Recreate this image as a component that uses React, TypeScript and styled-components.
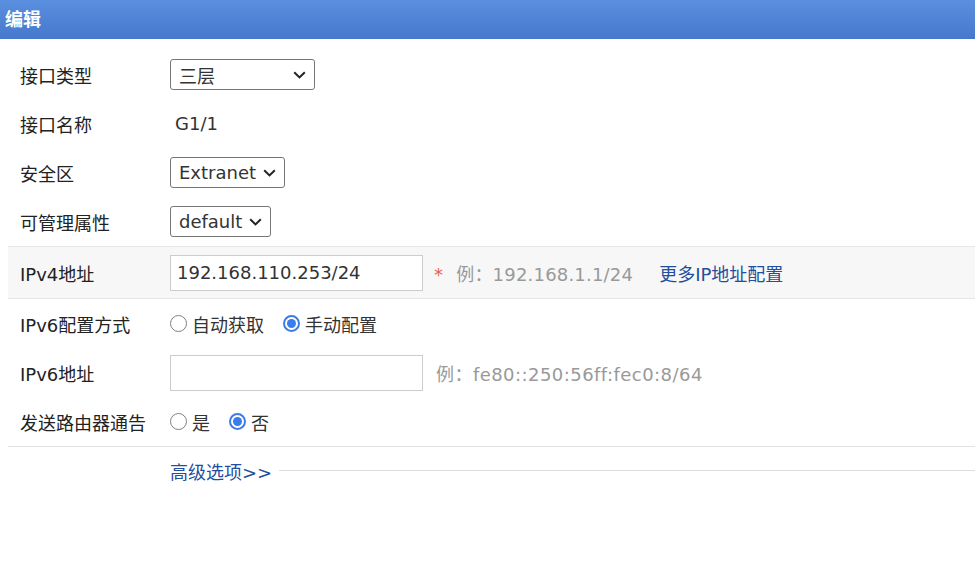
import React from "react";
import styled, { createGlobalStyle } from "styled-components";

const GlobalStyle = createGlobalStyle`
  html, body {
    margin: 0;
    padding: 0;
    background: #ffffff;
  }
  body {
    font-family: "DejaVu Sans", "Noto Sans CJK SC", sans-serif;
    font-size: 18px;
    color: #222;
  }
  * { box-sizing: border-box; }
`;

const Header = styled.div`
  height: 39px;
  display: flex;
  align-items: center;
  padding: 0 0 3px 5px;
  background: linear-gradient(to bottom, #5b8fe0, #4678cc);
  color: #ffffff;
  font-weight: bold;
  font-size: 18px;
  font-family: "Noto Sans CJK SC", sans-serif;
`;

const Form = styled.div`
  margin: 11px 0 0 8px;
  display: flex;
  flex-direction: column;
`;

const Row = styled.div<{ $h?: number; $shaded?: boolean }>`
  display: flex;
  align-items: center;
  height: ${(p) => p.$h ?? 49}px;
  background: ${(p) => (p.$shaded ? "#f7f7f7" : "transparent")};
  border-top: ${(p) => (p.$shaded ? "1px solid #e6e6e6" : "none")};
  border-bottom: ${(p) => (p.$shaded ? "1px solid #e6e6e6" : "none")};
`;

const Label = styled.div`
  width: 162px;
  flex: none;
  padding-left: 12px;
  color: #222;
  white-space: nowrap;
`;

const Value = styled.div`
  display: flex;
  align-items: center;
  flex: 1;
  color: #333;
  white-space: nowrap;
`;

const PlainText = styled.span`
  padding-left: 5px;
  color: #333;
`;

const SelectBox = styled.div<{ $w?: number }>`
  display: inline-flex;
  align-items: center;
  justify-content: space-between;
  gap: 7px;
  height: 31px;
  ${(p) => (p.$w ? `width: ${p.$w}px;` : "")}
  padding: 0 8px 0 8px;
  border: 1px solid #767676;
  border-radius: 3px;
  background: #fff;
  color: #333;
`;

const Chevron = styled.svg`
  width: 13px;
  height: 8px;
  flex: none;
`;

const TextInput = styled.div`
  width: 253px;
  height: 36px;
  display: flex;
  align-items: center;
  padding: 0 6px;
  border: 1px solid #cccccc;
  background: #fff;
  color: #333;
`;

const Hint = styled.span<{ $ml?: number; $ls?: number }>`
  margin-left: ${(p) => p.$ml ?? 12}px;
  letter-spacing: ${(p) => p.$ls ?? 0}px;
  color: #999;
`;

const Star = styled.span`
  color: #e86050;
  margin-right: 13px;
`;

const Link = styled.span<{ $ml?: number }>`
  margin-left: ${(p) => p.$ml ?? 0}px;
  color: #1f4f9e;
  cursor: pointer;
`;

const RadioGroup = styled.div`
  display: flex;
  align-items: center;
  gap: 19px;
`;

const RadioOption = styled.label`
  display: inline-flex;
  align-items: center;
  gap: 5px;
  color: #333;
`;

const RadioDot = styled.span<{ $checked?: boolean }>`
  width: 17px;
  height: 17px;
  border-radius: 50%;
  flex: none;
  border: ${(p) => (p.$checked ? "2px solid #3a7ceb" : "1.5px solid #808080")};
  background: #fff;
  display: inline-flex;
  align-items: center;
  justify-content: center;
  &::after {
    content: "";
    display: ${(p) => (p.$checked ? "block" : "none")};
    width: 9px;
    height: 9px;
    border-radius: 50%;
    background: #3a7ceb;
  }
`;

const AdvancedRow = styled.div`
  display: flex;
  align-items: center;
  height: 48px;
  border-top: 1px solid #e3e3e3;
  padding-left: 162px;
`;

const Divider = styled.div`
  flex: 1;
  height: 1px;
  background: #dddddd;
  margin-left: 7px;
`;

const Select: React.FC<{ value: string; width?: number }> = ({ value, width }) => (
  <SelectBox $w={width}>
    <span>{value}</span>
    <Chevron viewBox="0 0 13 8">
      <path d="M1.2 1.2 L6.5 6.4 L11.8 1.2" fill="none" stroke="#222" strokeWidth="2" />
    </Chevron>
  </SelectBox>
);

const Radio: React.FC<{ label: string; checked?: boolean }> = ({ label, checked }) => (
  <RadioOption>
    <RadioDot $checked={checked} />
    <span>{label}</span>
  </RadioOption>
);

export default function App() {
  return (
    <>
      <GlobalStyle />
      <Header>编辑</Header>
      <Form>
        <Row>
          <Label>接口类型</Label>
          <Value>
            <Select value="三层" width={145} />
          </Value>
        </Row>
        <Row>
          <Label>接口名称</Label>
          <Value>
            <PlainText>G1/1</PlainText>
          </Value>
        </Row>
        <Row>
          <Label>安全区</Label>
          <Value>
            <Select value="Extranet" />
          </Value>
        </Row>
        <Row>
          <Label>可管理属性</Label>
          <Value>
            <Select value="default" />
          </Value>
        </Row>
        <Row $h={53} $shaded>
          <Label>IPv4地址</Label>
          <Value>
            <TextInput>192.168.110.253/24</TextInput>
            <Hint $ml={11} $ls={0.2}>
              <Star>*</Star>例：192.168.1.1/24
            </Hint>
            <Link $ml={26}>更多IP地址配置</Link>
          </Value>
        </Row>
        <Row>
          <Label>IPv6配置方式</Label>
          <Value>
            <RadioGroup>
              <Radio label="自动获取" />
              <Radio label="手动配置" checked />
            </RadioGroup>
          </Value>
        </Row>
        <Row>
          <Label>IPv6地址</Label>
          <Value>
            <TextInput />
            <Hint $ml={13} $ls={0.45}>例：fe80::250:56ff:fec0:8/64</Hint>
          </Value>
        </Row>
        <Row>
          <Label>发送路由器通告</Label>
          <Value>
            <RadioGroup>
              <Radio label="是" />
              <Radio label="否" checked />
            </RadioGroup>
          </Value>
        </Row>
        <AdvancedRow>
          <Link>高级选项&gt;&gt;</Link>
          <Divider />
        </AdvancedRow>
      </Form>
    </>
  );
}
